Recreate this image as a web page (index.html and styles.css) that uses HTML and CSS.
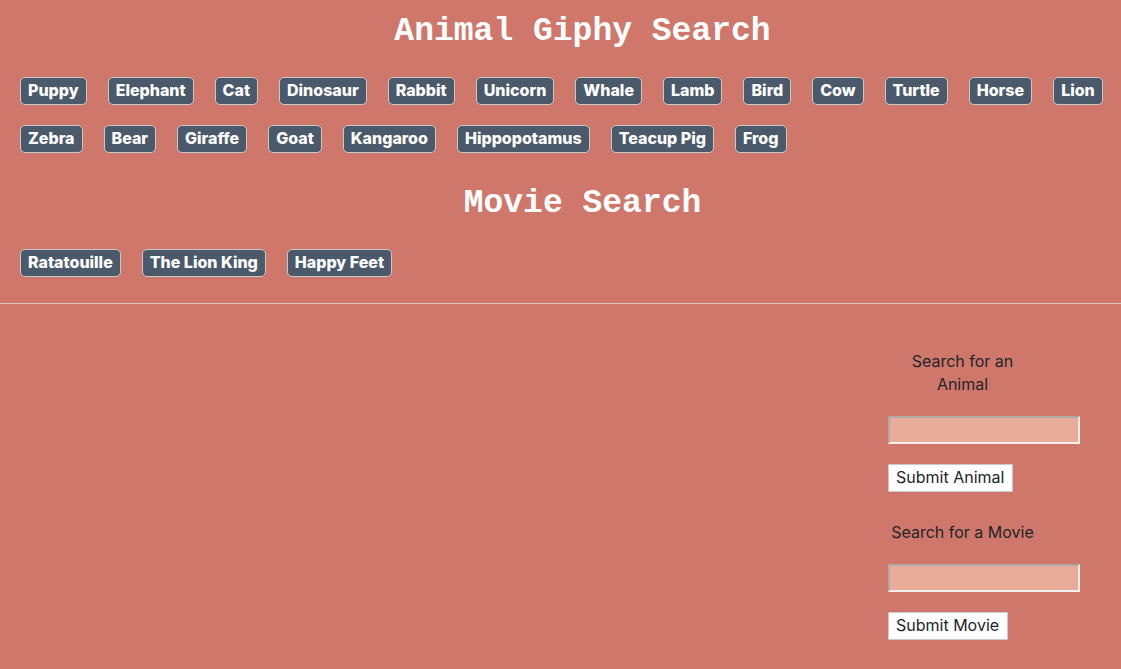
FILE: index.html
```html
<!DOCTYPE html>
<html lang="en">
<head>
<meta charset="utf-8">
<title>Animal Giphy Search</title>
<link rel="stylesheet" href="styles.css">
</head>
<body>
<header class="topics">
  <h1 class="title">Animal Giphy Search</h1>
  <div class="buttons">
    <button class="topic">Puppy</button>
    <button class="topic">Elephant</button>
    <button class="topic">Cat</button>
    <button class="topic">Dinosaur</button>
    <button class="topic">Rabbit</button>
    <button class="topic">Unicorn</button>
    <button class="topic">Whale</button>
    <button class="topic">Lamb</button>
    <button class="topic">Bird</button>
    <button class="topic">Cow</button>
    <button class="topic">Turtle</button>
    <button class="topic">Horse</button>
    <button class="topic">Lion</button>
    <button class="topic">Zebra</button>
    <button class="topic">Bear</button>
    <button class="topic">Giraffe</button>
    <button class="topic">Goat</button>
    <button class="topic">Kangaroo</button>
    <button class="topic">Hippopotamus</button>
    <button class="topic">Teacup Pig</button>
    <button class="topic">Frog</button>
  </div>
  <h1 class="title">Movie Search</h1>
  <div class="buttons">
    <button class="topic">Ratatouille</button>
    <button class="topic">The Lion King</button>
    <button class="topic">Happy Feet</button>
  </div>
</header>
<main class="content">
  <section class="results"></section>
  <aside class="forms">
    <form class="search">
      <label class="label" for="animal">Search for an Animal</label>
      <input class="field" id="animal" type="text">
      <button class="submit" type="button">Submit Animal</button>
    </form>
    <form class="search">
      <label class="label" for="movie">Search for a Movie</label>
      <input class="field" id="movie" type="text">
      <button class="submit" type="button">Submit Movie</button>
    </form>
  </aside>
</main>
</body>
</html>
```
FILE: styles.css
```css
* {
  box-sizing: border-box;
}

body {
  margin: 0;
  background: #cf776b;
  color: #212529;
  font: 16px/23px Inter, "Liberation Sans", sans-serif;
}

.topics {
  padding: 12px 12px 26px 20px;
  border-bottom: 1px solid #d8c6c3;
}

.title {
  margin: 0 0 25px;
  padding-left: 36px;
  color: #fff;
  font: bold 33px/40px "Courier New", "Liberation Mono", monospace;
  text-align: center;
}

.buttons {
  display: flex;
  flex-wrap: wrap;
  gap: 20px 21px;
}

.buttons + .title {
  margin-top: 31px;
}

.topic {
  height: 28px;
  padding: 0 7px 2px;
  border: 1px solid #c6cacb;
  border-radius: 5px;
  background: #4a5a6b;
  color: #fff;
  font: 800 16px/22px Inter, "Liberation Sans", sans-serif;
}

.content {
  display: flex;
  padding: 46px 41px 28px 20px;
}

.results {
  flex: 1;
}

.forms {
  display: grid;
  gap: 29px;
  width: 192px;
}

.search {
  display: flex;
  flex-direction: column;
  align-items: flex-start;
  gap: 20px;
}

.label {
  width: 149px;
  text-align: center;
}

.field {
  width: 100%;
  height: 28px;
  padding: 0 4px;
  border: 2px solid;
  border-color: #b0a9a6 #f6efed #f6efed #b0a9a6;
  background: #e8ac9a;
  font: inherit;
}

.submit {
  height: 28px;
  padding: 0 8px 2px 7px;
  border: 1px solid #c6cacb;
  background: #fff;
  color: #212529;
  font: inherit;
}
```
